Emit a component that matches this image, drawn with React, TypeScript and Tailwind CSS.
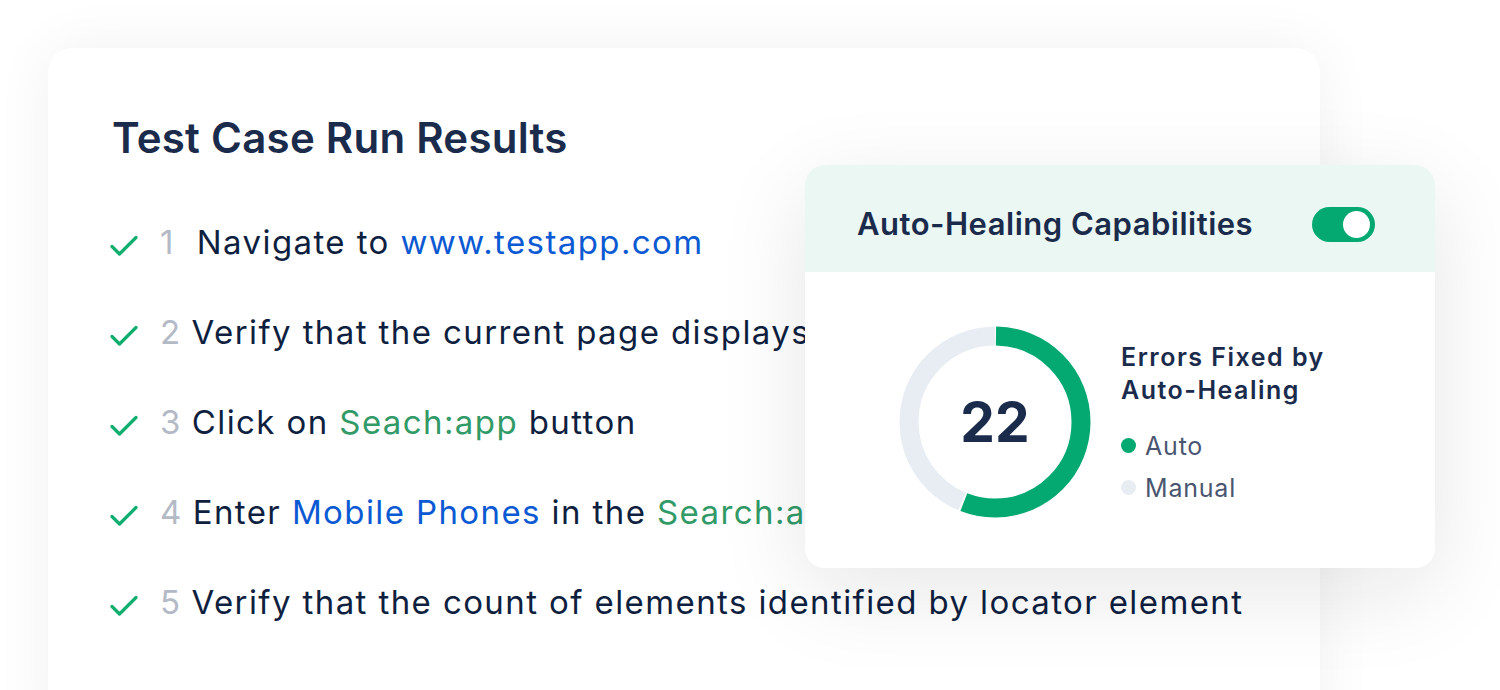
import React from "react";

function Check() {
  return (
    <svg width="28" height="22" viewBox="0 0 28 22" fill="none">
      <path d="M2 11.5 L9.5 19 L26 2.5" stroke="#0fae6e" strokeWidth="3.2" strokeLinecap="round" strokeLinejoin="round" />
    </svg>
  );
}

function Donut() {
  const r = 86;
  const c = 2 * Math.PI * r;
  const greenFrac = 0.56;
  const gap = 2;
  const green = c * greenFrac - gap;
  const gray = c * (1 - greenFrac) - gap;
  return (
    <svg width="200" height="200" viewBox="0 0 200 200">
      <g transform="rotate(-90 100 100)">
        <circle
          cx="100"
          cy="100"
          r={r}
          fill="none"
          stroke="#e7edf3"
          strokeWidth="19"
          strokeDasharray={`${gray} ${c - gray}`}
          strokeDashoffset={-(c * greenFrac + gap / 2)}
        />
        <circle
          cx="100"
          cy="100"
          r={r}
          fill="none"
          stroke="#03a971"
          strokeWidth="19"
          strokeDasharray={`${green} ${c - green}`}
          strokeDashoffset={-gap / 2}
        />
      </g>
    </svg>
  );
}

const steps: React.ReactNode[] = [
  <>
    <span className="text-[#b3bac6]">1</span>
    <span className="ml-[22px]">Navigate to </span>
    <span className="text-[#0b5ad3]">www.testapp.com</span>
  </>,
  <>
    <span className="text-[#b3bac6]">2</span>
    <span className="ml-[10px]">Verify that the current page displays the expected title</span>
  </>,
  <>
    <span className="text-[#b3bac6]">3</span>
    <span className="ml-[10px]">Click on </span>
    <span className="text-[#319a67]">Seach:app</span>
    <span> button</span>
  </>,
  <>
    <span className="text-[#b3bac6]">4</span>
    <span className="ml-[10px]">Enter </span>
    <span className="text-[#0b5ad3]">Mobile Phones</span>
    <span> in the </span>
    <span className="text-[#319a67]">Search:app</span>
    <span> field</span>
  </>,
  <>
    <span className="text-[#b3bac6]">5</span>
    <span className="ml-[10px]">Verify that the count of elements identified by locator element</span>
  </>,
];

export default function App() {
  return (
    <div
      className="relative w-[1500px] h-[690px] overflow-hidden bg-white"
      style={{ fontFamily: "Inter, 'Noto Sans', sans-serif" }}
    >
      <div className="pt-[48px] pl-[48px]">
        <div className="w-[1272px] h-[700px] rounded-[24px] bg-white shadow-[0_0_60px_rgba(15,23,42,0.06)] pl-[64px] pt-[64px]">
          <h1 className="text-[42px] leading-[52px] font-semibold text-[#1a2b4c] tracking-[0.25px]">
            Test Case Run Results
          </h1>
          <div className="mt-[34px] flex flex-col">
            {steps.map((s, i) => (
              <div key={i} className="h-[90px] flex items-center whitespace-nowrap">
                <div className="w-[48px] pt-[6px] -ml-[2px] mr-[2px]">
                  <Check />
                </div>
                <div className="text-[33px] text-[#0f1f3f] tracking-[1.4px]">{s}</div>
              </div>
            ))}
          </div>
        </div>
      </div>

      <div className="absolute left-[805px] top-[165px] w-[630px] h-[403px] rounded-[20px] bg-white overflow-hidden shadow-[0_24px_90px_rgba(15,23,42,0.10)]">
        <div className="h-[107px] bg-[#ebf7f2] pt-[12px] pl-[52px] pr-[60px] flex items-center justify-between">
          <div className="text-[31px] font-semibold text-[#1a2b4c] tracking-[0.5px]">Auto-Healing Capabilities</div>
          <div className="w-[63px] h-[35px] rounded-full bg-[#03a971] flex items-center justify-end pr-[5px]">
            <div className="w-[27px] h-[27px] rounded-full bg-white" />
          </div>
        </div>
        <div className="flex items-center pl-[90px] pt-[50px]">
          <div className="relative w-[200px] h-[200px]">
            <Donut />
            <div className="absolute inset-0 flex items-center justify-center text-[55px] font-bold text-[#1a2b4c]">
              22
            </div>
          </div>
          <div className="ml-[26px] mt-[5px]">
            <div className="text-[25px] leading-[33px] font-semibold text-[#1a2b4c] tracking-[1.5px]">
              Errors Fixed by
              <br />
              Auto-Healing
            </div>
            <div className="mt-[18px] flex items-center text-[25px] leading-[42px] text-[#4a5670] tracking-[0.8px]">
              <span className="w-[15px] h-[15px] rounded-full bg-[#03a971] mr-[9px]" />
              Auto
            </div>
            <div className="flex items-center text-[25px] leading-[42px] text-[#4a5670] tracking-[0.8px]">
              <span className="w-[15px] h-[15px] rounded-full bg-[#e7edf3] mr-[9px]" />
              Manual
            </div>
          </div>
        </div>
      </div>
    </div>
  );
}
